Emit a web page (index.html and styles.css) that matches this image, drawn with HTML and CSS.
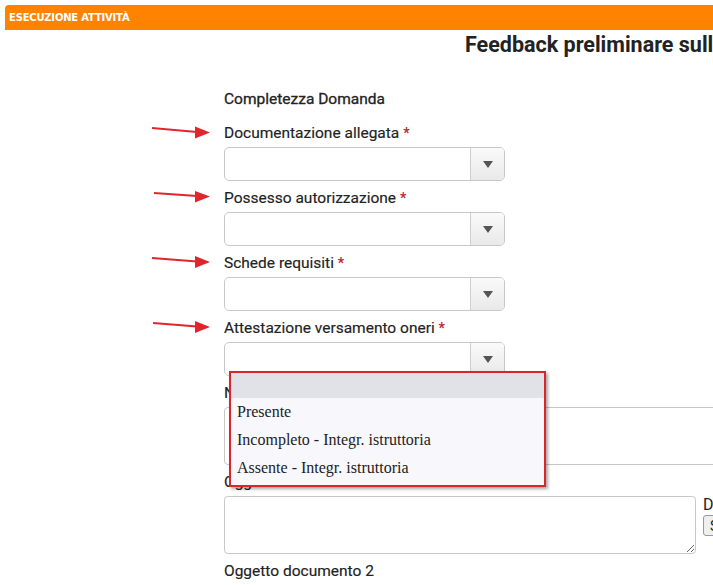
FILE: index.html
```html
<!DOCTYPE html>
<html lang="it">
<head>
    <meta charset="UTF-8">
    <meta name="viewport" content="width=device-width, initial-scale=1.0">
    <title>Esecuzione attività</title>
    <link rel="stylesheet" href="styles.css">
</head>
<body>
    <div class="topbar">ESECUZIONE ATTIVITÀ</div>
    <h1 class="title">Feedback preliminare sulla completezza della domanda</h1>

    <div class="form">
        <div class="section">Completezza Domanda</div>

        <div class="field">
            <label class="lbl">Documentazione allegata <span class="req">*</span>
                <svg class="pointer" viewBox="0 0 60 14"><line x1="1" y1="3" x2="46" y2="7" /><polygon points="44,1.5 59,7.5 44,13.5" /></svg>
            </label>
            <div class="select"><span class="select-btn"><i class="caret"></i></span></div>
        </div>

        <div class="field">
            <label class="lbl">Possesso autorizzazione <span class="req">*</span>
                <svg class="pointer" viewBox="0 0 60 14"><line x1="3" y1="3" x2="46" y2="6" /><polygon points="44,1 59,6.5 44,12.5" /></svg>
            </label>
            <div class="select"><span class="select-btn"><i class="caret"></i></span></div>
        </div>

        <div class="field">
            <label class="lbl">Schede requisiti <span class="req">*</span>
                <svg class="pointer" viewBox="0 0 60 14"><line x1="1" y1="3" x2="46" y2="6.5" /><polygon points="44,1 59,7 44,13" /></svg>
            </label>
            <div class="select"><span class="select-btn"><i class="caret"></i></span></div>
        </div>

        <div class="field">
            <label class="lbl">Attestazione versamento oneri <span class="req">*</span>
                <svg class="pointer" viewBox="0 0 60 14"><line x1="2" y1="3" x2="46" y2="6.5" /><polygon points="44,1 59,7 44,13" /></svg>
            </label>
            <div class="select">
                <span class="select-btn"><i class="caret"></i></span>
                <ul class="dropdown">
                    <li class="active">&nbsp;</li>
                    <li>Presente</li>
                    <li>Incompleto - Integr. istruttoria</li>
                    <li>Assente - Integr. istruttoria</li>
                </ul>
            </div>
        </div>

        <div class="field">
            <label class="lbl">Note</label>
            <textarea class="area wide"></textarea>
        </div>

        <div class="field">
            <label class="lbl">Oggetto documento 1</label>
            <div class="row">
                <textarea class="area"></textarea>
                <div class="side">
                    <div class="side-lbl">Documento 1</div>
                    <button class="browse">Sfoglia...</button>
                </div>
            </div>
        </div>

        <div class="field">
            <label class="lbl">Oggetto documento 2</label>
            <div class="row">
                <textarea class="area"></textarea>
                <div class="side">
                    <div class="side-lbl">Documento 2</div>
                    <button class="browse">Sfoglia...</button>
                </div>
            </div>
        </div>
    </div>
</body>
</html>
```

FILE: styles.css
```css
html {
    background-color: #fff;
}

body {
    margin: 0;
    font-family: Roboto, "Open Sans", sans-serif;
    color: #222;
    overflow: hidden;
    height: 585px;
}

.topbar {
    margin: 5px 0 0 5px;
    height: 25px;
    line-height: 25px;
    padding-left: 4px;
    background-color: #ff8200;
    border-top-left-radius: 4px;
    color: #fff;
    font-family: "DejaVu Sans", sans-serif;
    font-weight: bold;
    font-size: 10px;
    letter-spacing: -0.2px;
}

.title {
    margin: 3px 0 0 465px;
    font-size: 21.5px;
    line-height: 24px;
    font-weight: bold;
    white-space: nowrap;
    color: #222;
}

.form {
    margin: 32px 0 0 224px;
}

.section {
    font-size: 15.5px;
    line-height: 20px;
    margin-bottom: 14px;
    -webkit-text-stroke: 0.3px #222;
}

.field {
    margin-bottom: 7px;
}

.lbl {
    display: block;
    position: relative;
    font-size: 15.5px;
    line-height: 21px;
    margin-bottom: 3px;
    white-space: nowrap;
    -webkit-text-stroke: 0.15px #222;
}

.req {
    color: #b8282e;
    font-weight: bold;
    font-size: 14px;
    -webkit-text-stroke: 0;
}

.pointer {
    position: absolute;
    left: -73px;
    top: 2px;
    width: 60px;
    height: 14px;
}

.pointer line {
    stroke: #e0262c;
    stroke-width: 2;
}

.pointer polygon {
    fill: #e0262c;
}

.select {
    position: relative;
    box-sizing: border-box;
    width: 281px;
    height: 34px;
    border: 1px solid #c8c8c8;
    border-radius: 5px;
    display: flex;
    justify-content: flex-end;
    background-color: #fff;
}

.select-btn {
    width: 33px;
    border-left: 1px solid #cfcfcf;
    border-radius: 0 4px 4px 0;
    background: linear-gradient(#fafafa, #e9e9e9);
    display: flex;
    align-items: center;
    justify-content: center;
}

.caret {
    width: 0;
    height: 0;
    border-left: 5px solid transparent;
    border-right: 5px solid transparent;
    border-top: 7px solid #555;
}

.dropdown {
    position: absolute;
    top: 28px;
    left: 4px;
    z-index: 10;
    box-sizing: border-box;
    width: 317px;
    margin: 0;
    padding: 0 0 3px 0;
    list-style: none;
    background-color: #f8f8fc;
    border: 2px solid #d9262c;
    box-shadow: 2px 2px 3px rgba(0, 0, 0, 0.35);
    font-family: "Liberation Serif", serif;
    font-size: 16px;
    color: #222;
}

.dropdown li {
    height: 28px;
    line-height: 28px;
    padding-left: 6px;
}

.dropdown li.active {
    height: 25px;
    background-color: #e1e1e8;
}

.row {
    display: flex;
    gap: 7px;
    align-items: flex-start;
}

.area {
    display: block;
    box-sizing: border-box;
    width: 472px;
    height: 58px;
    border: 1px solid #c8c8c8;
    border-radius: 4px;
    margin: 0;
    flex-shrink: 0;
}

.area.wide {
    width: 620px;
}

.side {
    white-space: nowrap;
}

.side-lbl {
    font-size: 16px;
    line-height: 15px;
    margin-top: 1px;
}

.browse {
    margin-top: 3px;
    padding: 1px 6px;
    height: 21px;
    font-family: Roboto, sans-serif;
    font-size: 14px;
    border: 1px solid #999;
    border-radius: 3px;
    background-color: #efefef;
    color: #222;
}
```
